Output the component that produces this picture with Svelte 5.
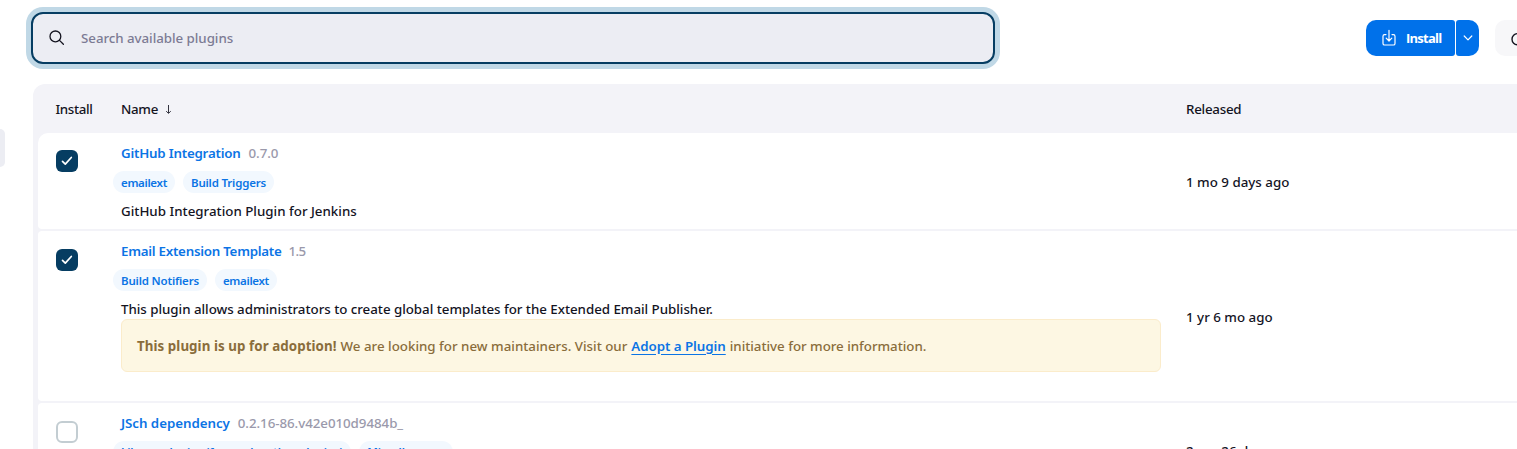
<script>
  const plugins = [
    {
      name: 'GitHub Integration', version: '0.7.0', checked: true, height: 96,
      tags: ['emailext', 'Build Triggers'],
      text: 'GitHub Integration Plugin for Jenkins', released: '1 mo 9 days ago'
    },
    {
      name: 'Email Extension Template', version: '1.5', checked: true, height: 170, adopt: true,
      tags: ['Build Notifiers', 'emailext'],
      text: 'This plugin allows administrators to create global templates for the Extended Email Publisher.',
      released: '1 yr 6 mo ago'
    },
    {
      name: 'JSch dependency', version: '0.2.16-86.v42e010d9484b_', checked: false, height: 94,
      tags: ['Library plugins (for use by other plugins)', 'Miscellaneous'],
      text: 'Jenkins plugin that brings the JSch library as a plugin dependency', released: '2 mo 26 days ago'
    }
  ];
</script>

<div class="page">
  <div class="side"><div class="side-item"></div></div>
  <main>
    <div class="bar">
      <label class="search">
        <svg width="16" height="16" viewBox="0 0 16 16" fill="none" stroke="#14141f" stroke-width="1.3" stroke-linecap="round"><circle cx="6.4" cy="6.4" r="5.4" /><path d="M10.5 10.4 14.4 14.2" /></svg>
        <span class="placeholder">Search available plugins</span>
      </label>
      <div class="actions">
        <button class="install">
          <svg width="14" height="18" viewBox="0 0 14 18" fill="none" stroke="#fff" stroke-width="1.2" stroke-linecap="round" stroke-linejoin="round"><path d="M4 5.6H2.6Q1 5.6 1 7.2V14.4Q1 16 2.6 16H11.4Q13 16 13 14.4V7.2Q13 5.6 11.4 5.6H10M7 1.3V11.8M4.2 9.2 7 12 9.8 9.2" /></svg>
          <span>Install</span>
        </button>
        <button class="more" aria-label="More">
          <svg width="10" height="6" viewBox="0 0 10 6" fill="none" stroke="#fff" stroke-width="1.2" stroke-linecap="round" stroke-linejoin="round"><path d="M1.2 1 5 4.8 8.8 1" /></svg>
        </button>
        <button class="refresh" aria-label="Refresh">
          <svg width="16" height="16" viewBox="0 0 16 16" fill="none" stroke="#14141f" stroke-width="1.4"><circle cx="7.6" cy="9.2" r="5.6" /></svg>
        </button>
      </div>
    </div>
    <section class="table">
      <div class="row head">
        <div class="c1"><span class="h1">Install</span></div>
        <div class="c2"><span class="h2">Name</span><span class="arrow"><svg width="6" height="9" viewBox="0 0 6 9" fill="none" stroke="#33333f" stroke-width="1"><path d="M3.5 0V8M1.2 6.2 3.5 8.4 5.8 6.2" /></svg></span></div>
        <div class="c3"><span class="h3">Released</span></div>
      </div>
      {#each plugins as p, i}
        <div class="row body" class:first={i === 0} style="height: {p.height}px">
          <div class="c1">
            <span class="check" class:on={p.checked}>
              {#if p.checked}
                <svg width="12" height="10" viewBox="0 0 12 10" fill="none" stroke="#fff" stroke-width="1.7" stroke-linecap="round" stroke-linejoin="round"><path d="M1.5 5.3 4.3 8.1 10.3 1.5" /></svg>
              {/if}
            </span>
          </div>
          <div class="c2">
            <div class="title"><a class="n{i}" href="#top">{p.name}</a><span class="version v{i}">{p.version}</span></div>
            <div class="tags g{i}">
              {#each p.tags as t}<span class="tag" class:tight={t === 'emailext'}>{t}</span>{/each}
            </div>
            <div class="desc d{i}">{p.text}</div>
            {#if p.adopt}
              <div class="alert"><strong>This plugin is up for adoption!</strong><span class="a1">We are looking for new maintainers. Visit our</span><a href="#top">Adopt a Plugin</a><span class="a2">initiative for more information.</span></div>
            {/if}
          </div>
          <div class="c3"><span class="r{i}">{p.released}</span></div>
        </div>
      {/each}
    </section>
  </main>
</div>

<style>
  :global(body) { overflow: hidden; background: #fff; }
  .page { display: flex; width: 1517px; height: 449px; overflow: hidden; font: 500 13.33px/20px "Noto Sans", "Open Sans", sans-serif; color: #14141f; white-space: nowrap; }
  .side { width: 33px; flex: none; padding-top: 129px; box-sizing: border-box; }
  .side-item { width: 5px; height: 38px; border-radius: 0 9px 9px 0; background: #ecedf3; }
  main { flex: none; width: 1600px; }
  .bar { display: flex; height: 84px; box-sizing: border-box; padding-top: 12px; margin-left: -2px; align-items: flex-start; }
  .search { display: flex; align-items: center; width: 964px; height: 52px; box-sizing: border-box; padding-left: 16px; border: 2px solid #063d62; border-radius: 12px; background: #ecedf3; box-shadow: 0 0 0 5px #c0d8e6; gap: 16px; }
  .placeholder { color: #7c7b94; letter-spacing: -0.05px; }
  .actions { display: flex; margin: 8px 0 0 371px; }
  button { display: flex; align-items: center; border: 0; padding: 0; height: 36px; font: inherit; }
  .install { width: 89px; gap: 10px; padding-left: 16px; border-radius: 10px 3px 3px 10px; background: #0071ea; color: #fff; font: 700 13px "Open Sans", sans-serif; letter-spacing: -0.75px; box-sizing: border-box; }
  .more { width: 23px; margin-left: 1px; padding-bottom: 1px; box-sizing: border-box; justify-content: center; border-radius: 3px 10px 10px 3px; background: #0071ea; }
  .refresh { width: 50px; margin-left: 16px; padding-left: 15px; border-radius: 10px; background: #f7f7f9; box-sizing: border-box; }
  .table { display: flex; flex-direction: column; gap: 2px; padding: 0 5px; background: #f3f3f8; border-radius: 12px 12px 0 0; }
  .row { display: flex; flex: none; }
  .head { height: 49px; align-items: center; margin-bottom: -2px; }
  .h1 { letter-spacing: -0.35px; }
  .h2 { letter-spacing: -0.3px; }
  .h3 { letter-spacing: -0.25px; }
  .body { background: #fff; border-radius: 4px; }
  .first { border-radius: 10px 4px 4px 4px; }
  .c1 { width: 83px; flex: none; padding-left: 18px; box-sizing: border-box; }
  .head .c1 { padding-left: 17.5px; }
  .c2 { width: 1040px; flex: none; }
  .c3 { padding-left: 25px; }
  .arrow { margin-left: 7px; }
  .body .c3 { align-self: center; padding-top: 2px; }
  .check { display: flex; align-items: center; justify-content: center; width: 22px; height: 22px; box-sizing: border-box; margin-top: 17px; border: 2px solid #c3cdd2; border-radius: 6px; }
  .body:not(.first) .check { margin-top: 18px; }
  .check.on { border: 0; background: #063d62; }
  .body .c2 { padding-top: 10px; }
  .title { display: flex; gap: 8px; }
  a { color: #0b74e5; text-decoration: none; font-weight: 600; letter-spacing: -0.22px; }
  a.n1 { letter-spacing: -0.25px; }
  a.n2 { letter-spacing: -0.05px; }
  .version { color: #9a99ab; letter-spacing: -0.05px; }
  .v1 { letter-spacing: -0.7px; margin-left: -1px; }
  .tags { display: flex; gap: 8px; margin: 8px 0 8px -8px; height: 22px; }
  .tag { padding: 0 8px; border-radius: 11px; background: #f2f8fe; color: #0b74e5; font-size: 11.5px; font-weight: 600; letter-spacing: -0.18px; line-height: 23px; }
  .tight { letter-spacing: -0.33px; }
  .g2 .tag { letter-spacing: -0.13px; line-height: 21px; }
  .d1 { letter-spacing: -0.03px; }
  .alert { display: flex; align-items: center; gap: 4px; height: 53px; box-sizing: border-box; padding-left: 15px; border: 1px solid #fbeccb; border-radius: 6px; background: #fdf7e3; color: #8a6d3b; }
  .alert strong { letter-spacing: 0.07px; }
  .alert a { text-decoration: underline; text-underline-offset: 3px; letter-spacing: -0.05px; }
  .a2 { letter-spacing: -0.03px; }
</style>
